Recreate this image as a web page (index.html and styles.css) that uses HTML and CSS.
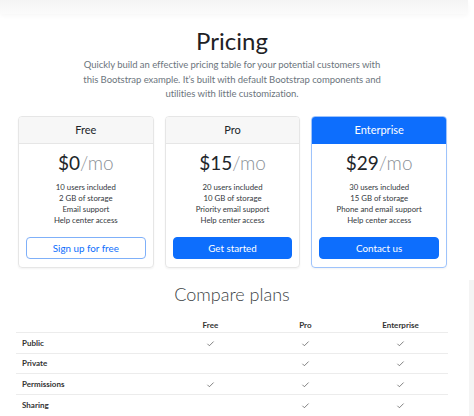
FILE: index.html
```html
<!DOCTYPE html>
<html>
<head>
<meta charset="utf-8">
<link rel="stylesheet" href="styles.css">
</head>
<body>
<div class="topbar"></div>
<main class="container">
  <header class="intro">
    <h1 class="title">Pricing</h1>
    <p class="lead">Quickly build an effective pricing table for your potential customers with this Bootstrap example. It’s built with default Bootstrap components and utilities with little customization.</p>
  </header>

  <section class="cards">
    <div class="card">
      <div class="card-head">Free</div>
      <div class="card-body">
        <div class="price">$0<span class="per">/mo</span></div>
        <ul class="features">
          <li>10 users included</li>
          <li>2 GB of storage</li>
          <li>Email support</li>
          <li>Help center access</li>
        </ul>
        <button class="btn btn-outline">Sign up for free</button>
      </div>
    </div>
    <div class="card">
      <div class="card-head">Pro</div>
      <div class="card-body">
        <div class="price">$15<span class="per">/mo</span></div>
        <ul class="features">
          <li>20 users included</li>
          <li>10 GB of storage</li>
          <li>Priority email support</li>
          <li>Help center access</li>
        </ul>
        <button class="btn btn-primary">Get started</button>
      </div>
    </div>
    <div class="card card-primary">
      <div class="card-head">Enterprise</div>
      <div class="card-body">
        <div class="price">$29<span class="per">/mo</span></div>
        <ul class="features">
          <li>30 users included</li>
          <li>15 GB of storage</li>
          <li>Phone and email support</li>
          <li>Help center access</li>
        </ul>
        <button class="btn btn-primary">Contact us</button>
      </div>
    </div>
  </section>

  <h2 class="compare-title">Compare plans</h2>
  <table class="compare">
    <thead>
      <tr><th class="label-col"></th><th>Free</th><th>Pro</th><th>Enterprise</th></tr>
    </thead>
    <tbody>
      <tr><th class="row-label">Public</th><td><svg class="check" viewBox="0 0 16 16"><path d="M2.5 8.5 6 12 13.5 4.5"/></svg></td><td><svg class="check" viewBox="0 0 16 16"><path d="M2.5 8.5 6 12 13.5 4.5"/></svg></td><td><svg class="check" viewBox="0 0 16 16"><path d="M2.5 8.5 6 12 13.5 4.5"/></svg></td></tr>
      <tr><th class="row-label">Private</th><td></td><td><svg class="check" viewBox="0 0 16 16"><path d="M2.5 8.5 6 12 13.5 4.5"/></svg></td><td><svg class="check" viewBox="0 0 16 16"><path d="M2.5 8.5 6 12 13.5 4.5"/></svg></td></tr>
      <tr><th class="row-label">Permissions</th><td><svg class="check" viewBox="0 0 16 16"><path d="M2.5 8.5 6 12 13.5 4.5"/></svg></td><td><svg class="check" viewBox="0 0 16 16"><path d="M2.5 8.5 6 12 13.5 4.5"/></svg></td><td><svg class="check" viewBox="0 0 16 16"><path d="M2.5 8.5 6 12 13.5 4.5"/></svg></td></tr>
      <tr><th class="row-label">Sharing</th><td></td><td><svg class="check" viewBox="0 0 16 16"><path d="M2.5 8.5 6 12 13.5 4.5"/></svg></td><td><svg class="check" viewBox="0 0 16 16"><path d="M2.5 8.5 6 12 13.5 4.5"/></svg></td></tr>
    </tbody>
  </table>
</main>
<div class="scroll-edge"></div>
</body>
</html>
```
FILE: styles.css
```css
* { box-sizing: border-box; }
html, body { margin: 0; padding: 0; background: #fff; }
body {
  font-family: Lato, "Noto Sans", sans-serif;
  color: #212529;
  overflow: hidden;
  height: 416px;
  position: relative;
}
.topbar {
  height: 14px;
  margin-right: 6px;
  background: linear-gradient(#f4f4f4, #fbfbfb);
  box-shadow: 0 2px 4px rgba(0,0,0,0.03);
}
.scroll-edge {
  position: absolute;
  right: 0;
  top: 280px;
  bottom: 0;
  width: 5px;
  background: #f4f4f4;
}
.container {
  width: 432px;
  margin: 0 auto 0 16px;
}
.intro { text-align: center; }
.title {
  margin: 12px 0 0;
  font-size: 24px;
  font-weight: 400;
  line-height: 30px;
  color: #1e2125;
}
.lead {
  margin: 2px auto 0;
  width: 304px;
  font-size: 9.5px;
  letter-spacing: -0.05px;
  line-height: 14.5px;
  color: #6c757d;
}
.cards {
  display: grid;
  grid-template-columns: repeat(3, 1fr);
  gap: 11px;
  padding: 0 1px 0 2px;
  margin-top: 14px;
}
.card {
  border: 1px solid #e6e6e6;
  border-radius: 4px;
  box-shadow: 0 1px 2px rgba(0,0,0,0.05);
  overflow: hidden;
  text-align: center;
}
.card-head {
  height: 27px;
  line-height: 26px;
  background: #f7f7f7;
  border-bottom: 1px solid #e6e6e6;
  font-size: 11px;
}
.card-primary { border-color: #9ec3fb; }
.card-primary .card-head {
  background: #0d6efd;
  border-bottom-color: #0d6efd;
  color: #fff;
}
.card-body { padding: 6px 7px 8px; }
.price {
  font-size: 19px;
  line-height: 26px;
}
.per { color: #8a9096; font-weight: 300; }
.features {
  list-style: none;
  margin: 6px 0 11px;
  padding: 0;
  font-size: 7.8px;
  line-height: 11px;
  color: #33383d;
}
.btn {
  display: block;
  width: 100%;
  height: 22px;
  border-radius: 4px;
  font-family: inherit;
  font-size: 9.8px;
  padding: 0;
  cursor: pointer;
}
.btn-outline {
  background: #fff;
  border: 1px solid #7fb0f9;
  color: #0d6efd;
}
.btn-primary {
  background: #0d6efd;
  border: 1px solid #0d6efd;
  color: #fff;
}
.compare-title {
  margin: 15px 0 0;
  text-align: center;
  font-size: 18px;
  font-weight: 300;
  line-height: 22px;
  color: #3b3f44;
}
.compare {
  width: 100%;
  border-collapse: collapse;
  margin-top: 15px;
  font-size: 8px;
}
.compare th, .compare td {
  border-bottom: 1px solid #ececec;
  text-align: center;
  padding: 0;
  height: 20.5px;
}
.compare thead th {
  height: 13px;
  vertical-align: top;
  font-weight: 700;
  color: #333;
}
.compare .label-col { width: 34%; }
.compare thead th:not(.label-col) { width: 22%; }
.compare .row-label {
  text-align: left;
  padding-left: 6px;
  font-weight: 700;
  color: #333;
}
.compare tbody tr:last-child th, .compare tbody tr:last-child td { border-bottom: none; }
.check {
  width: 9px;
  height: 9px;
  display: inline-block;
  vertical-align: middle;
  fill: none;
  stroke: #555;
  stroke-width: 1.3;
}
```
